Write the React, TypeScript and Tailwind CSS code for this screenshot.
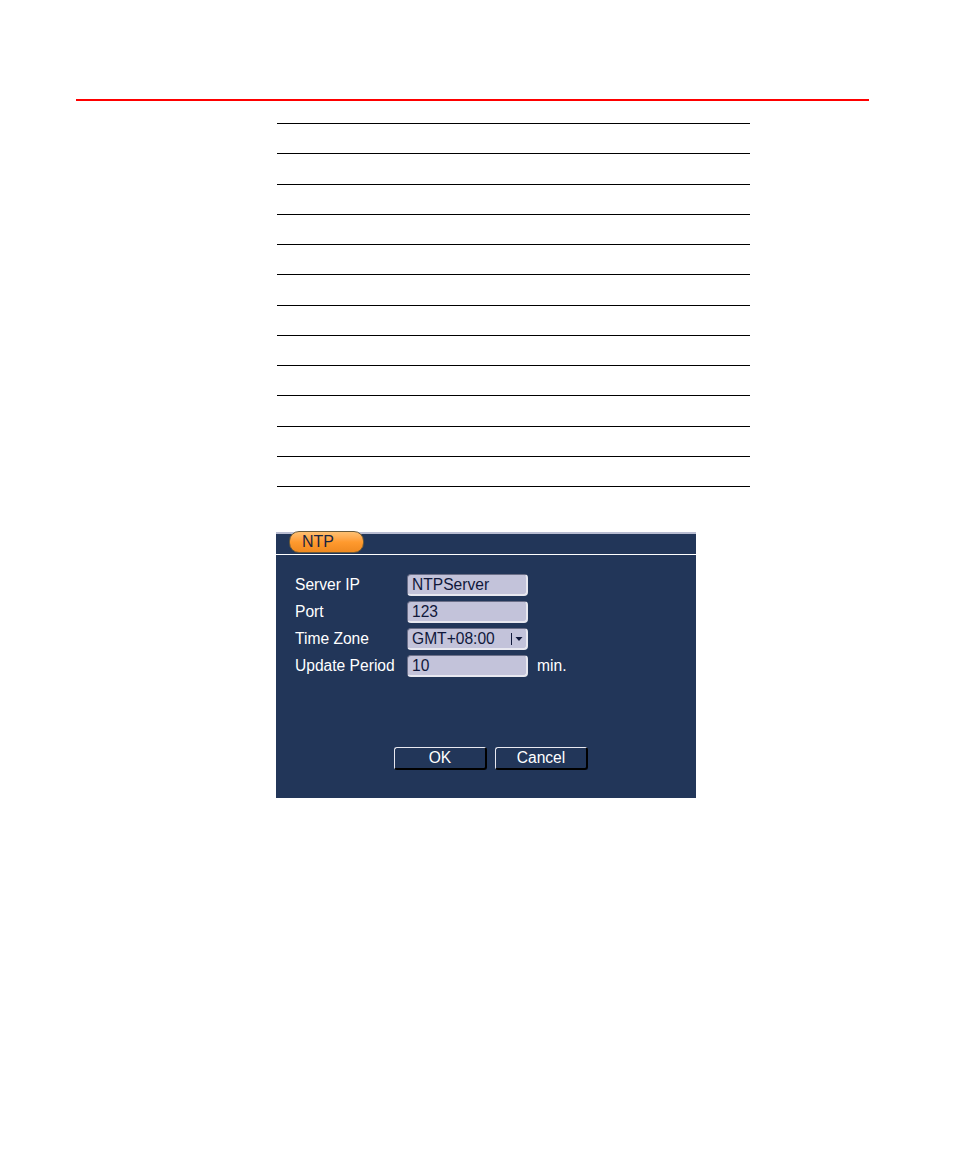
export default function App() {
  const rows = Array.from({ length: 12 });
  const fields = [
    { label: "Server IP", value: "NTPServer" },
    { label: "Port", value: "123" },
    { label: "Time Zone", value: "GMT+08:00", select: true },
    { label: "Update Period", value: "10", unit: "min." },
  ];

  return (
    <div className="min-h-[1157px] bg-white font-['Liberation_Sans',Arial,sans-serif]">
      <div className="pt-[99px]">
        {/* red rule */}
        <div className="ml-[76px] h-[2px] w-[793px] bg-[#ff0000]" />

        {/* empty table lines */}
        <div className="ml-[277px] mt-[22px] w-[473px] border-t-[1.5px] border-black">
          {rows.map((_, i) => (
            <div key={i} className="h-[30.25px] border-b-[1.5px] border-black" />
          ))}
        </div>

        {/* NTP dialog */}
        <div className="ml-[276px] mt-[45px] h-[266px] w-[420px] bg-[#223659] text-white">
          <div className="h-[2px] bg-[#b9bdd2]" />
          <div className="relative h-[21px] border-b-[1.5px] border-white">
            <div className="absolute left-[13px] top-[-3px] flex h-[22px] w-[75px] items-center rounded-[10px] border border-[#6a5a3a] bg-gradient-to-b from-[#ffc070] via-[#ff9a2e] to-[#f08a20] pl-[12px] text-[16px] leading-none text-[#1b2440]">
              NTP
            </div>
          </div>

          <div className="flex flex-col gap-[5px] pl-[19px] pt-[19px]">
            {fields.map((f) => (
              <div key={f.label} className="flex h-[22px] items-center">
                <div className="w-[112px] text-[15.6px] leading-none">{f.label}</div>
                <div className="flex h-[22px] w-[121px] items-center rounded-[4px] border-b-2 border-r-2 border-l border-t border-b-[#e8e8f0] border-r-[#e8e8f0] border-l-[#6b6f88] border-t-[#6b6f88] bg-[#c3c3da] pl-[4px] text-[15.6px] leading-none text-[#10183a]">
                  <span className="flex-1">{f.value}</span>
                  {f.select && (
                    <span className="flex items-center pr-[3px]">
                      <span className="mr-[3px] h-[12px] w-[1.5px] bg-[#10183a]" />
                      <svg width="8" height="6" viewBox="0 0 8 6">
                        <path d="M0.5 1 L7.5 1 L4 5 Z" fill="#10183a" />
                      </svg>
                    </span>
                  )}
                </div>
                {f.unit && <span className="ml-[9px] text-[15.6px] leading-none">{f.unit}</span>}
              </div>
            ))}
          </div>

          <div className="ml-[118px] mt-[70px] flex gap-[8px]">
            {["OK", "Cancel"].map((b) => (
              <div
                key={b}
                className="flex h-[23px] w-[93px] items-center justify-center rounded-[3px] border-l-[1.5px] border-t-[1.5px] border-r-2 border-b-2 border-l-[#e8e8f0] border-t-[#e8e8f0] border-r-black border-b-black text-[15.6px] leading-none"
              >
                {b}
              </div>
            ))}
          </div>
        </div>
      </div>
    </div>
  );
}
